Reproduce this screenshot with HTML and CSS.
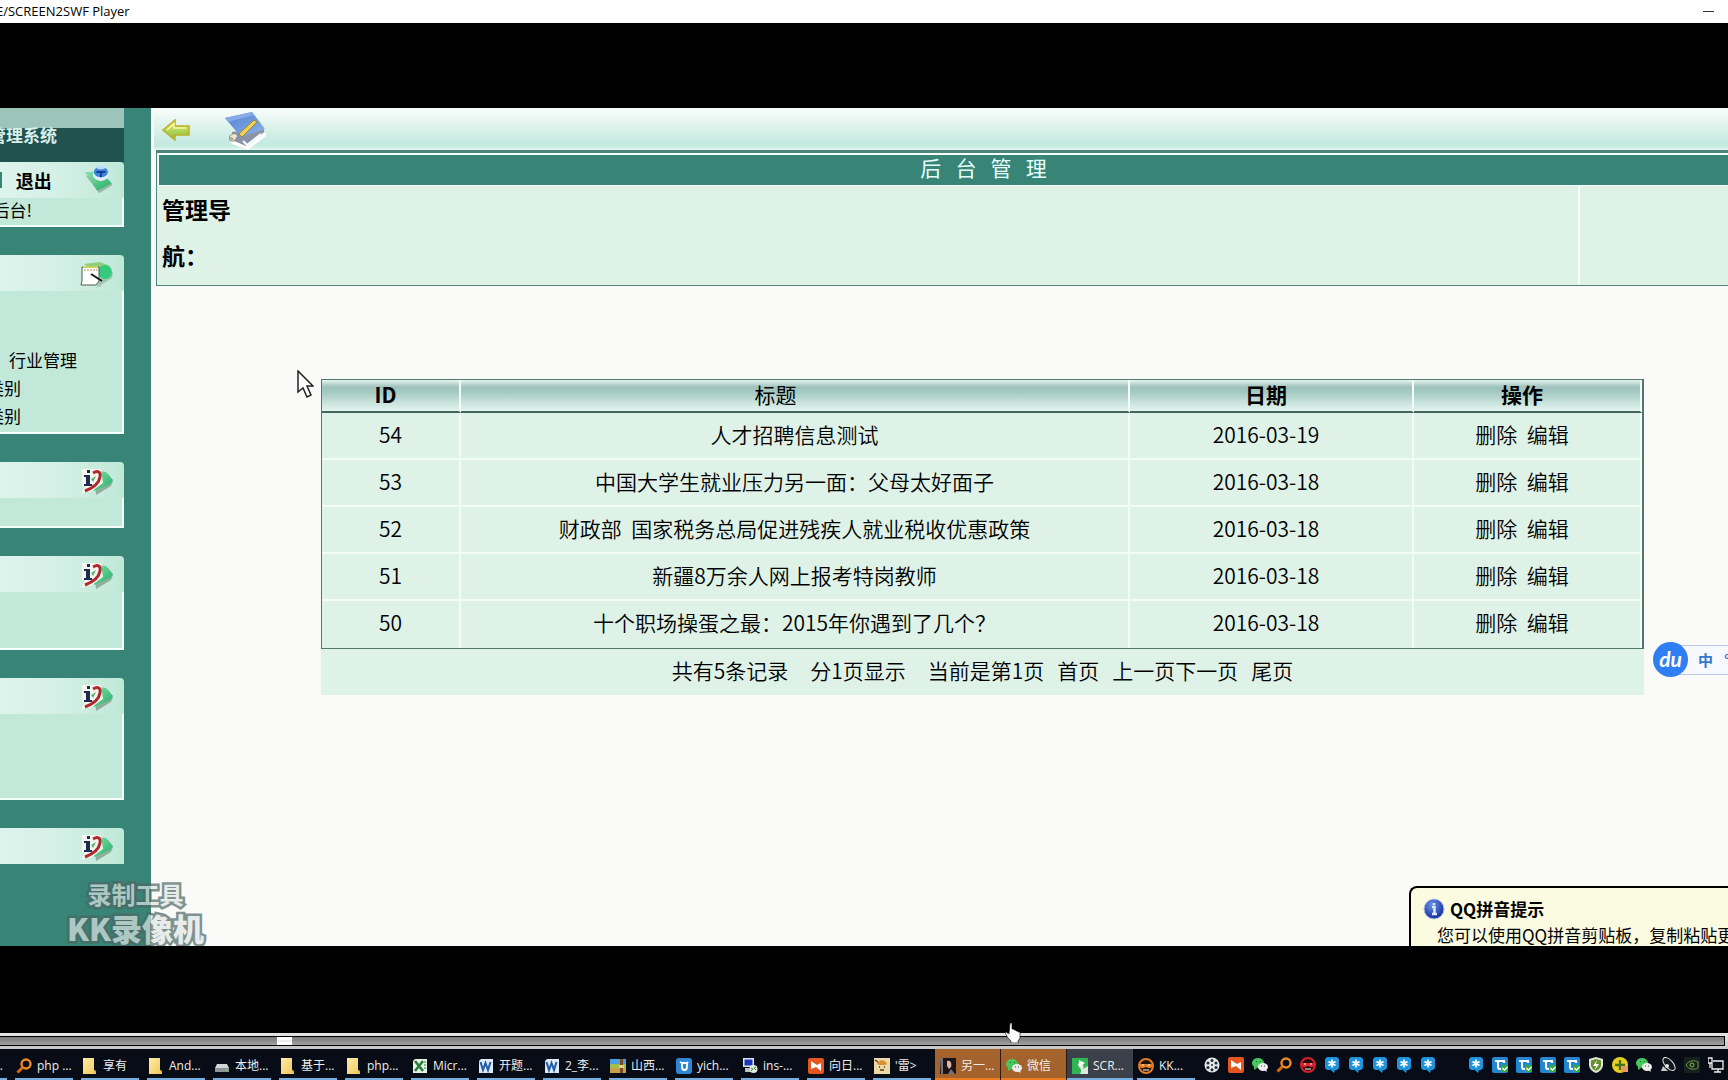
FILE: index.html
```html
<!DOCTYPE html>
<html lang="zh-CN">
<head>
<meta charset="utf-8">
<title>SCREEN2SWF Player</title>
<link rel="stylesheet" href="styles.css">
</head>
<body>
<svg class="defs" aria-hidden="true">
  <defs>
    <linearGradient id="gLeaf" x1="0" y1="0" x2="1" y2="1"><stop offset="0" stop-color="#8fe0ac"/><stop offset="1" stop-color="#1fae68"/></linearGradient>
    <linearGradient id="gArrow" x1="0" y1="0" x2="0" y2="1"><stop offset="0" stop-color="#e9ee6c"/><stop offset="1" stop-color="#7fc043"/></linearGradient>
    <linearGradient id="gBook" x1="0" y1="0" x2="1" y2="1"><stop offset="0" stop-color="#4f7fd0"/><stop offset="1" stop-color="#8fb4ea"/></linearGradient>
    <linearGradient id="gFolder" x1="0" y1="0" x2="1" y2="1"><stop offset="0" stop-color="#ffeaa5"/><stop offset="1" stop-color="#f0c95c"/></linearGradient>
    <radialGradient id="gInfo" cx=".4" cy=".3" r=".7"><stop offset="0" stop-color="#6d92e8"/><stop offset="1" stop-color="#12309a"/></radialGradient>
  </defs>
  <symbol id="i-id" viewBox="0 0 34 28">
    <path d="M16 27 31 18 33 13 28 6 14 3z" fill="#8fae9b"/><path d="M14 23 30 16 33 12 26 4 12 2z" fill="url(#gLeaf)"/>
    <path d="M2 1h19l2 14-11 8-11 3 4-8H2z" fill="#f4f6f0"/>
    <path d="M7 2h3v3H7zM4 7h6v9h2v2H4v-2h2v-7H4z" fill="#1e2c50"/>
    <path d="M13 5c5-3 8-1 7 4-1 6-7 11-15 14" fill="none" stroke="#b3272b" stroke-width="3"/>
    <path d="M11 11l5-3-3 6z" fill="#4fb877"/>
  </symbol>
  <symbol id="i-note" viewBox="0 0 34 28">
    <path d="M16 27 32 17 33 12 26 5z" fill="#9cc8ad"/><path d="M4 3 20 1l10 4-5 12z" fill="#8fcf7b"/><circle cx="25" cy="11" r="7" fill="#35c97f"/>
    <path d="M2 6h17v14l-3 4H1l1-4z" fill="#fff" stroke="#4c5c50"/><path d="M4 9h14" stroke="#c98a44" stroke-dasharray="2 1"/><path d="M3 6h15" stroke="#c9d35a" stroke-width="2"/>
    <path d="M11 13 22 20" stroke="#141414" stroke-width="2"/><path d="M17 24l6-4-2 6z" fill="#b5bdb5"/>
  </symbol>
  <symbol id="i-exit" viewBox="0 0 34 34">
    <path d="M2 12 17 32 32 23 30 19z" fill="#9db7a6"/><path d="M1 8 20 8 31 21 15 29z" fill="url(#gLeaf)"/>
    <ellipse cx="19" cy="11" rx="9" ry="7" fill="#e3effb"/><ellipse cx="19" cy="8" rx="8" ry="6" fill="#3f86da"/><ellipse cx="19" cy="3" rx="5" ry="2" fill="#bcdcfa"/><path d="M14 8h10M19 8v6" stroke="#123f94" stroke-width="2"/>
  </symbol>
  <symbol id="i-back" viewBox="0 0 28 22">
    <path d="M1 11 13 1v6h14v9H13v5z" fill="url(#gArrow)" stroke="#bfae28" stroke-width="1.5"/><path d="M5 11l7-6v4h12" fill="none" stroke="#f6f9a8" stroke-width="1.5"/>
  </symbol>
  <symbol id="i-book" viewBox="0 0 44 40">
    <path d="M6 30 24 36 42 22v4L24 40 8 34z" fill="#fff"/><path d="M8 22 40 18v4L22 36 8 30z" fill="#8b93a8"/>
    <path d="M1 8 28 2 41 19 17 27z" fill="url(#gBook)"/><path d="M1 8 28 2l2 3L4 12z" fill="#86abe8"/>
    <path d="M15 24 30 10l3 2-15 15z" fill="#f1d35a" stroke="#a5862b"/><path d="M5 27c2-3 4-4 7-3l2 2-3 4c-2 2-5 1-6-1l4 0z" fill="#e8e4da" stroke="#96876c"/><path d="M19 31l4 4 14-11" fill="none" stroke="#fff" stroke-width="2"/>
  </symbol>
  <symbol id="i-folder" viewBox="0 0 16 16"><path d="M1 0h11v12l2 1v3H1z" fill="url(#gFolder)"/><path d="M12 1v11l2 1v2l-2-1z" fill="#d9aa3c"/></symbol>
  <symbol id="i-search" viewBox="0 0 16 16"><circle cx="10" cy="6" r="4.5" fill="none" stroke="#ee8a1e" stroke-width="2.4"/><path d="M6.500 9.500 1.500 14.500" stroke="#d96a12" stroke-width="3"/></symbol>
  <symbol id="i-drive" viewBox="0 0 16 16"><path d="M3 6h10l2 4H1z" fill="#d3d6d8"/><path d="M1 10h14v4H1z" fill="#8f9497"/><circle cx="13" cy="12" r="1" fill="#56e05a"/></symbol>
  <symbol id="i-excel" viewBox="0 0 16 16"><path d="M3 1h12v14H1V3z" fill="#e7f3e5"/><path d="M3 3l8 10M11 3 3 13" stroke="#2a7d3c" stroke-width="2.600"/><path d="M12 4h2M12 7h2M12 10h2" stroke="#2a7d3c"/></symbol>
  <symbol id="i-word" viewBox="0 0 16 16"><path d="M3 1h12v14H1V3z" fill="#dceafa"/><path d="M2.500 4 5 12 7.500 5 10 12 12.500 4" fill="none" stroke="#1f5ca8" stroke-width="2"/></symbol>
  <symbol id="i-rar" viewBox="0 0 16 16"><path d="M0 1h16v5H0z" fill="#4a9fe0"/><path d="M0 6h16v4H0z" fill="#9dbf4b"/><path d="M0 10h16v5H0z" fill="#c8a04d"/><path d="M10 1h3v14h-3z" fill="#7b4b26"/><path d="M9 7h5v3H9z" fill="#e8cf86"/></symbol>
  <symbol id="i-yi" viewBox="0 0 16 16"><rect width="16" height="16" rx="3" fill="#2f86d2"/><path d="M4 4l2 1v4c0 4 5 4 5 0V5l1-1M6 5h5" fill="none" stroke="#fff" stroke-width="1.800"/></symbol>
  <symbol id="i-ins" viewBox="0 0 16 16"><path d="M1 0h11v9H1z" fill="#dde5f2"/><path d="M2.500 1.500h8v6h-8z" fill="#1f35b8"/><path d="M3 10h6v4H3z" fill="#b9bfc9"/><circle cx="11.500" cy="11" r="4" fill="#e6ecdc"/><path d="M9 10l2 1-2 2M14 9l-2 1 2 2" fill="none" stroke="#3c8d38"/></symbol>
  <symbol id="i-sun" viewBox="0 0 16 16"><rect width="16" height="16" rx="2" fill="#e5551f"/><path d="M3 3l6 4 4-2v8L8 9l-5 2z" fill="#fff"/></symbol>
  <symbol id="i-lei" viewBox="0 0 16 16"><rect width="16" height="16" fill="#ecd9a8"/><path d="M3 6c2-5 8-5 10 0l-2 1H5z" fill="#d8922d"/><path d="M5 9h1M10 9h1M6 12h4M1 2l3 2" stroke="#5b3515" stroke-width="1.500"/></symbol>
  <symbol id="i-photo" viewBox="0 0 16 16"><rect width="16" height="16" fill="#1b1517"/><path d="M7 3c4-1 5 3 4 6l-2 2-2-3z" fill="#e0b3a2"/><path d="M0 0h3v16H1zM11 11l4 5H8z" fill="#77727a"/></symbol>
  <symbol id="i-wechat" viewBox="0 0 16 16"><ellipse cx="6" cy="6" rx="6" ry="5" fill="#45c95a"/><path d="M2 9l0 4 3-2z" fill="#45c95a"/><ellipse cx="11" cy="10" rx="5" ry="4" fill="#ececec"/><path d="M12 13l3 2-1-3z" fill="#ececec"/><path d="M4 4.500h1M8 4.500h1M9 9h1M12 9h1" stroke="#24562d"/></symbol>
  <symbol id="i-scr" viewBox="0 0 16 16"><rect width="16" height="16" fill="#dfe8dd"/><path d="M0 0h16v8l-5 3C14 5 5 3 6 7c1 3 5 4 2 9H0z" fill="#2fb653"/><path d="M7 2l6 3-6 4z" fill="#fff"/></symbol>
  <symbol id="i-kk" viewBox="0 0 16 16"><circle cx="8" cy="8" r="7" fill="#20130d" stroke="#e37c24" stroke-width="2"/><path d="M2 6h12v3c-2 2-4 1-6 0-2 1-4 2-6 0z" fill="#e37c24"/><path d="M4 7h2M10 7h2M5 12h6" stroke="#fff"/></symbol>
  <symbol id="i-film" viewBox="0 0 16 16"><circle cx="8" cy="8" r="7.500" fill="#e4e6ea"/><g fill="#242a34"><circle cx="8" cy="3.500" r="1.500"/><circle cx="12" cy="6" r="1.500"/><circle cx="12" cy="10.500" r="1.500"/><circle cx="8" cy="12.700" r="1.500"/><circle cx="4" cy="10.500" r="1.500"/><circle cx="4" cy="6" r="1.500"/><circle cx="8" cy="8" r="1"/></g></symbol>
  <symbol id="i-red" viewBox="0 0 16 16"><circle cx="8" cy="8" r="7" fill="#260708" stroke="#d9202a" stroke-width="2"/><path d="M2 6h12v3c-2 2-4 1-6 0-2 1-4 2-6 0z" fill="#df2430"/><path d="M4 7h2M10 7h2M5 12h6" stroke="#fff"/></symbol>
  <symbol id="i-star" viewBox="0 0 16 16"><path d="M3 0h10l2 2v9l-2 2h-2l-1 3-3-3H3l-2-2V2z" fill="#1f93dc"/><path d="M8 2.500v8M4.500 4.500l7 4M11.500 4.500l-7 4" stroke="#fff" stroke-width="1.700"/></symbol>
  <symbol id="i-c" viewBox="0 0 16 16"><rect width="16" height="16" rx="2" fill="#2485d0"/><path d="M12 6V4H6v6q0 2 2 2h2M3 4h3" fill="none" stroke="#fff" stroke-width="2"/><rect x="9" y="8" width="7" height="7" fill="#37a844"/><path d="M10.500 11l2 2 3-3" fill="none" stroke="#fff" stroke-width="1.300"/></symbol>
  <symbol id="i-shield" viewBox="0 0 16 16"><path d="M8 0l7 2v6c0 4-4 7-7 8-3-1-7-4-7-8V2z" fill="#dfe6d5"/><path d="M8 2l5 1.500V8c0 3-3 5-5 6-2-1-5-3-5-6V3.500z" fill="#64902f"/><path d="M9 3 5 9h3l-1 4 4-6H8z" fill="#fff"/></symbol>
  <symbol id="i-plus" viewBox="0 0 16 16"><circle cx="8" cy="8" r="8" fill="#e7cf22"/><path d="M8 3v10M3 8h10" stroke="#41731c" stroke-width="2.400"/><rect x="9" y="9" width="7" height="6" fill="#e59c5c"/></symbol>
  <symbol id="i-dish" viewBox="0 0 16 16"><ellipse cx="9" cy="7" rx="8" ry="4" transform="rotate(48 9 7)" fill="#14181e" stroke="#e6e6e6"/><path d="M3 9l-2 5h7z" fill="#c7cbd0"/><circle cx="7" cy="9" r="2" fill="#e6e6e6"/></symbol>
  <symbol id="i-nv" viewBox="0 0 16 16"><rect width="16" height="16" fill="#17201c"/><path d="M2 8c3-5 9-5 12-3v6c-4 2-9 2-12-3z" fill="none" stroke="#6a9a45"/><circle cx="8" cy="8" r="2" fill="none" stroke="#8abf57"/></symbol>
  <symbol id="i-net" viewBox="0 0 16 16"><path d="M5 4h10v8H4V6M6 15h7M10 12v3M0 1h4v5H0zM2 6v5" fill="none" stroke="#f0f0f0" stroke-width="1.300"/></symbol>
</svg>

<div class="player">
  <header class="titlebar"><span class="titlebar-text">E/SCREEN2SWF Player</span><button class="minimize" aria-label="最小化"></button></header>

  <main class="letterbox">
    <div class="stage">
      <nav class="sidebar">
        <div class="side-top"></div>
        <div class="side-title">管理系统</div>
        <section class="panel panel-user">
          <div class="panel-head"><span class="divider"></span><a class="logout" href="#">退出</a><svg class="icon-exit"><use href="#i-exit"/></svg></div>
          <div class="panel-body"><p class="welcome">后台!</p></div>
        </section>
        <section class="panel panel-menu">
          <div class="panel-head"><svg class="panel-icon"><use href="#i-note"/></svg></div>
          <div class="panel-body"><a class="menu-wide" href="#">行业管理</a><a href="#">类别</a><a href="#">类别</a></div>
        </section>
        <section class="panel panel-short"><div class="panel-head"><svg class="panel-icon"><use href="#i-id"/></svg></div><div class="panel-body"></div></section>
        <section class="panel panel-medium"><div class="panel-head"><svg class="panel-icon"><use href="#i-id"/></svg></div><div class="panel-body"></div></section>
        <section class="panel panel-tall"><div class="panel-head"><svg class="panel-icon"><use href="#i-id"/></svg></div><div class="panel-body"></div></section>
        <section class="panel"><div class="panel-head"><svg class="panel-icon"><use href="#i-id"/></svg></div></section>
      </nav>

      <div class="content">
        <div class="toolbar"><button aria-label="返回"><svg class="icon-back"><use href="#i-back"/></svg></button><button aria-label="记录"><svg class="icon-book"><use href="#i-book"/></svg></button></div>
        <section class="admin">
          <h1>后   台   管   理</h1>
          <div class="admin-row"><p>管理导<br>航：</p><div class="admin-side"></div></div>
        </section>
        <div class="records">
          <table>
            <colgroup><col class="c-id"><col class="c-title"><col class="c-date"><col class="c-act"></colgroup>
            <thead><tr><th class="shift">ID</th><th class="th-title">标题</th><th class="shift">日期</th><th class="shift">操作</th></tr></thead>
            <tbody>
              <tr><td>54</td><td>人才招聘信息测试</td><td class="shift">2016-03-19</td><td class="shift"><a href="#">删除</a>&nbsp; <a href="#">编辑</a></td></tr>
              <tr><td>53</td><td>中国大学生就业压力另一面：父母太好面子</td><td class="shift">2016-03-18</td><td class="shift"><a href="#">删除</a>&nbsp; <a href="#">编辑</a></td></tr>
              <tr><td>52</td><td>财政部&nbsp; 国家税务总局促进残疾人就业税收优惠政策</td><td class="shift">2016-03-18</td><td class="shift"><a href="#">删除</a>&nbsp; <a href="#">编辑</a></td></tr>
              <tr><td>51</td><td>新疆8万余人网上报考特岗教师</td><td class="shift">2016-03-18</td><td class="shift"><a href="#">删除</a>&nbsp; <a href="#">编辑</a></td></tr>
              <tr><td>50</td><td>十个职场操蛋之最：2015年你遇到了几个？</td><td class="shift">2016-03-18</td><td class="shift"><a href="#">删除</a>&nbsp; <a href="#">编辑</a></td></tr>
            </tbody>
          </table>
          <div class="pager"><span>共有5条记录</span><span class="wide">分1页显示</span><span class="wide">当前是第1页</span><a href="#">首页</a><span><a href="#">上一页</a><a href="#">下一页</a></span><a href="#">尾页</a></div>
        </div>
      </div>

      <svg class="cursor-arrow" viewBox="0 0 17 28"><path d="M1 1v21l5-4 4 9 4-2-4-9h6z" fill="#fff" stroke="#222" stroke-width="1.500"/></svg>
      <div class="ime"><span class="ime-logo">du</span><span class="ime-bar"><span>中</span><span>°</span></span></div>
      <aside class="tip"><h2><svg class="icon-info" viewBox="0 0 22 22"><circle cx="11" cy="11" r="10" fill="url(#gInfo)" stroke="#b4c3e4"/><path d="M11 5v2M9 9h2.500v7M9 16h5" fill="none" stroke="#dfe8fb" stroke-width="2.400"/></svg>QQ拼音提示</h2><p>您可以使用QQ拼音剪贴板，复制粘贴更方便</p></aside>
      <div class="watermark"><span>录制工具</span><strong>KK录像机</strong></div>
    </div>
  </main>

  <div class="seek"><input type="range" min="0" max="1000" value="162" aria-label="播放进度"></div>

  <footer class="taskbar">
    <div class="tasks">
      <button class="task stub">...</button>
      <button class="task"><svg><use href="#i-search"/></svg>php ...</button>
      <button class="task"><svg><use href="#i-folder"/></svg>享有</button>
      <button class="task"><svg><use href="#i-folder"/></svg>And...</button>
      <button class="task"><svg><use href="#i-drive"/></svg>本地...</button>
      <button class="task"><svg><use href="#i-folder"/></svg>基于...</button>
      <button class="task"><svg><use href="#i-folder"/></svg>php...</button>
      <button class="task"><svg><use href="#i-excel"/></svg>Micr...</button>
      <button class="task"><svg><use href="#i-word"/></svg>开题...</button>
      <button class="task"><svg><use href="#i-word"/></svg>2_李...</button>
      <button class="task"><svg><use href="#i-rar"/></svg>山西...</button>
      <button class="task"><svg><use href="#i-yi"/></svg>yich...</button>
      <button class="task"><svg><use href="#i-ins"/></svg>ins-...</button>
      <button class="task"><svg><use href="#i-sun"/></svg>向日...</button>
      <button class="task"><svg><use href="#i-lei"/></svg>'雷&gt;</button>
      <button class="task alert"><svg><use href="#i-photo"/></svg>另一...</button>
      <button class="task alert"><svg><use href="#i-wechat"/></svg>微信</button>
      <button class="task active"><svg><use href="#i-scr"/></svg>SCR...</button>
      <button class="task"><svg><use href="#i-kk"/></svg>KK...</button>
    </div>
    <div class="tray">
      <svg><use href="#i-film"/></svg><svg><use href="#i-sun"/></svg><svg><use href="#i-wechat"/></svg><svg><use href="#i-search"/></svg><svg><use href="#i-red"/></svg>
      <svg><use href="#i-star"/></svg><svg><use href="#i-star"/></svg><svg><use href="#i-star"/></svg><svg><use href="#i-star"/></svg><svg><use href="#i-star"/></svg>
      <svg></svg><svg><use href="#i-star"/></svg><svg><use href="#i-c"/></svg><svg><use href="#i-c"/></svg><svg><use href="#i-c"/></svg><svg><use href="#i-c"/></svg>
      <svg><use href="#i-shield"/></svg><svg><use href="#i-plus"/></svg><svg><use href="#i-wechat"/></svg><svg><use href="#i-dish"/></svg><svg><use href="#i-nv"/></svg><svg><use href="#i-net"/></svg>
    </div>
  </footer>
  <svg class="cursor-hand" viewBox="0 0 16 21"><path d="M5 1h2v6h2v1h2v1h2v1h2v6l-2 3v2H6v-2L3 16 0 11l1-1 3 2z" fill="#fff" stroke="#000" stroke-width=".6"/></svg>
</div>
</body>
</html>
```

FILE: styles.css
```css
* { box-sizing: border-box; }
body { margin: 0; background: #000; color: #000; font-family: "Noto Sans CJK SC", "Noto Sans", sans-serif; }
h1, h2, p { margin: 0; }
a { color: inherit; text-decoration: none; }
button { margin: 0; padding: 0; border: 0; background: none; font: inherit; color: inherit; }
.defs { position: absolute; width: 0; height: 0; }

.player { position: relative; display: flex; flex-direction: column; min-height: 100vh; overflow: hidden; }
.titlebar { display: flex; justify-content: space-between; align-items: center; height: 23px; padding-right: 14px; background: #fff; font: 13px/23px "Open Sans", "Noto Sans", sans-serif; }
.titlebar-text { margin-left: -4px; }
.minimize { width: 11px; height: 1px; background: #333; }

.letterbox { flex: 1; display: flex; padding: 85px 0 87px; background: #000; }
.stage { position: relative; flex: 1; display: flex; overflow: hidden; background: #fafbf9; }

/* left menu, scrolled partly out of view */
.sidebar { flex: none; width: 151px; padding-right: 27px; background: #388578; white-space: nowrap; overflow: hidden; font-size: 17px; }
.side-top { height: 20px; background: #9cc4b9; }
.side-title { display: flex; justify-content: flex-end; height: 34px; padding-right: 67px; background: #20524f; color: #d9efea; font-weight: 700; line-height: 13px; }
.panel { margin-bottom: 28px; }
.panel-head { display: flex; align-items: center; justify-content: flex-end; gap: 14px; height: 36px; padding-right: 10px; background: linear-gradient(90deg, #ddf4ec, #d5f0e6 45%, #bfe8d8); border-top-right-radius: 4px; }
.panel-body { background: #c1e8d9; border: solid #f3fffb; border-width: 0 2px 2px 0; }
.panel-icon { width: 34px; height: 28px; margin-top: 4px; }
.icon-exit { width: 34px; height: 34px; margin-left: 18px; }
.divider { width: 2px; height: 16px; background: #388578; }
.logout { font-size: 18px; font-weight: 700; }
.panel-user .panel-body { height: 29px; }
.welcome { display: flex; justify-content: flex-end; padding-right: 90px; line-height: 24px; }
.panel-menu .panel-body { display: flex; flex-direction: column; align-items: flex-end; height: 143px; padding-top: 55px; line-height: 28px; }
.panel-menu a { padding-right: 101px; }
.panel-menu .menu-wide { padding-right: 45px; }
.panel-short .panel-body { height: 30px; }
.panel-medium .panel-body { height: 58px; }
.panel-tall .panel-body { height: 86px; }

/* right frame */
.content { flex: 1; min-width: 0; padding-left: 3px; }
.toolbar { display: flex; align-items: center; gap: 34px; height: 42px; padding: 2px 0 0 8px; background: linear-gradient(#fbfdfc, #e3f4ee 35%, #c1e9dd 90%, #e6f7f1); }
.toolbar button { display: flex; }
.icon-back { width: 28px; height: 22px; }
.icon-book { width: 44px; height: 40px; }
.admin { margin-left: 2px; border: solid #4e857a; border-width: 3px 0 1px 1px; background: #dff2e7; }
.admin h1 { height: 33px; margin-left: 1px; padding-left: 80px; border: solid #f5fffb; border-width: 2px 0 1px 1px; background: #388578; color: #e4fffb; font-size: 21px; font-weight: 400; line-height: 25px; text-align: center; white-space: pre; }
.admin-row { display: flex; height: 99px; }
.admin-row p { flex: 1; padding-left: 5px; font-size: 23px; font-weight: 700; line-height: 46px; }
.admin-side { width: 150px; border-left: 2px solid #f7fdf9; }

.records { margin: 93px 84px 0 167px; font-size: 21px; background: #dff2e7; }
table { width: 100%; table-layout: fixed; border-collapse: separate; border-spacing: 0; border: solid #50786e; border-width: 1px 2px 1px 1px; }
.c-id { width: 139px; }
.c-date { width: 284px; }
.c-act { width: 228px; }
th, td { padding: 0; text-align: center; white-space: nowrap; }
th { height: 33px; line-height: 28px; border-bottom: 2px solid #44665e; border-right: 2px solid #f3fbf7; background: linear-gradient(#e6f4ef, #9fc3bc 22%, #a3c8c1 38%, #c6e1da 70%, #e2f4ee); padding-bottom: 3px; }
.th-title { padding-right: 38px; font-weight: 400; }
td { height: 47px; line-height: 42px; padding-bottom: 3px; border-bottom: 2px solid #f3fbf7; border-right: 2px solid #f3fbf7; font-weight: 350; }
.shift { padding-right: 10px; }
tbody tr:last-child td { border-bottom: 0; padding-bottom: 5px; }
.pager { display: flex; justify-content: center; gap: 13px; height: 46px; line-height: 43px; font-weight: 350; }
.pager .wide { margin-left: 9px; }

/* things floating above the recorded page */
.cursor-arrow { position: absolute; left: 297px; top: 262px; width: 17px; height: 28px; }
.ime { position: absolute; right: 0; top: 534px; display: flex; align-items: center; width: 75px; height: 35px; }
.ime-logo { z-index: 1; width: 35px; height: 35px; border-radius: 50%; background: #2f7ff2; color: #fff; font: italic 700 21px/33px Lato, sans-serif; text-align: center; }
.ime-bar { flex: 1; display: flex; gap: 11px; height: 30px; margin-left: -18px; padding-left: 28px; border: solid #b7cae8; border-width: 1px 0; background: #f7f9ff; color: #3478cc; font-size: 15px; font-weight: 700; line-height: 28px; white-space: nowrap; overflow: hidden; }
.tip { position: absolute; right: 0; bottom: 0; width: 319px; height: 60px; padding: 8px 0 0 12px; border: solid #000; border-width: 2px 0 0 2px; border-top-left-radius: 8px; background: #fbfbe2; white-space: nowrap; overflow: hidden; }
.tip h2 { display: flex; align-items: center; gap: 5px; font-size: 17px; line-height: 26px; }
.icon-info { width: 22px; height: 22px; }
.tip p { padding-left: 14px; font-size: 17px; line-height: 26px; }
.watermark { position: absolute; left: 63px; bottom: 0; display: flex; flex-direction: column; align-items: center; padding: 0 4px; opacity: .7; color: #dfe5e4; font-size: 24px; font-weight: 700; line-height: 31px; -webkit-text-stroke: 5px #4d6664; paint-order: stroke fill; }
.watermark strong { font-size: 31px; line-height: 37px; }

.seek { display: flex; padding: 3px 3px 3px 0; background: linear-gradient(#e4e4e4, #c5c7c5); }
.seek input { -webkit-appearance: none; appearance: none; flex: 1; min-width: 0; height: 10px; margin: 0; border: solid #000; border-width: 1px 1px 1px 0; background: linear-gradient(#777, #a2a2a2); }
.seek input::-webkit-slider-thumb { -webkit-appearance: none; width: 15px; height: 8px; background: linear-gradient(#fff 40%, #d0d0d0 50%, #fff 60%); border-radius: 0; }

.taskbar { display: flex; justify-content: space-between; height: 31px; background: #070c16; color: #eee; }
.tasks { display: flex; font: 12px/31px "Open Sans", "Noto Sans CJK SC", sans-serif; }
.task { position: relative; display: flex; align-items: center; gap: 5px; width: 66px; padding: 2px 0 0 5px; white-space: nowrap; }
.task svg { flex: none; width: 16px; height: 16px; }
.task::after { content: ""; position: absolute; left: 4px; right: 4px; bottom: 0; height: 2px; background: #76aee0; }
.stub { width: 11px; justify-content: flex-end; padding: 2px 8px 0 0; overflow: hidden; }
.stub::after { left: 0; }
.alert { background: #a4622c; border-right: 1px solid #2a1a12; }
.alert::after { left: 0; right: 0; background: #ee7b1b; }
.active { background: #3a414a; }
.active::after { left: 0; right: 0; }
.tray { display: flex; align-items: center; }
.tray svg { width: 16px; height: 16px; margin: 0 4px; }
.cursor-hand { position: absolute; left: 1005px; bottom: 37px; width: 16px; height: 21px; }
```
